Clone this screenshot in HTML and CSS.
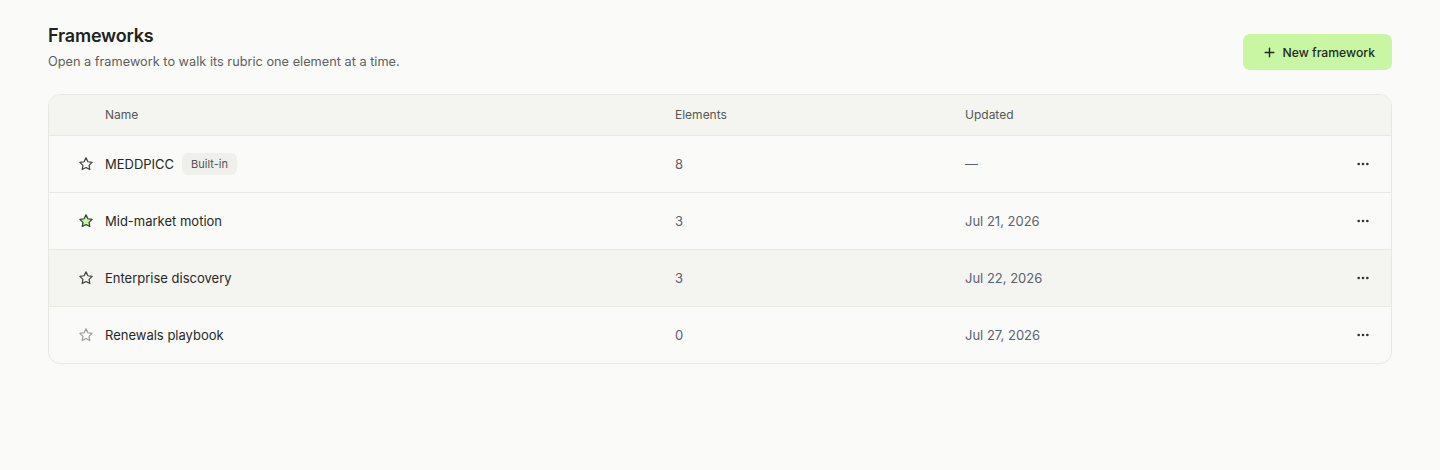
FILE: index.html
```html
<!DOCTYPE html>
<html lang="en">
<head>
<meta charset="utf-8">
<title>Frameworks</title>
<link rel="stylesheet" href="styles.css">
</head>
<body>
<main class="page">
  <header class="page-head">
    <div class="titles">
      <h1 class="title">Frameworks</h1>
      <p class="subtitle">Open a framework to walk its rubric one element at a time.</p>
    </div>
    <button class="btn-primary" type="button">
      <svg class="plus" viewBox="0 0 24 24" width="13" height="13" fill="none" stroke="currentColor" stroke-width="2.6" stroke-linecap="round"><path d="M12 4v16M4 12h16"/></svg>
      <span>New framework</span>
    </button>
  </header>

  <div class="table">
    <div class="row head">
      <div class="cell"></div>
      <div class="cell">Name</div>
      <div class="cell">Elements</div>
      <div class="cell">Updated</div>
      <div class="cell"></div>
    </div>

    <div class="row">
      <div class="cell star-cell"><svg class="star" viewBox="0 0 24 24"><path d="M12 2.8l2.85 5.78 6.38.93-4.62 4.5 1.09 6.35L12 17.36l-5.7 3 1.09-6.35-4.62-4.5 6.38-.93z"/></svg></div>
      <div class="cell name">MEDDPICC <span class="badge">Built-in</span></div>
      <div class="cell muted">8</div>
      <div class="cell muted">—</div>
      <div class="cell more"><svg viewBox="0 0 24 24" width="16" height="16"><circle cx="5.5" cy="12" r="2"/><circle cx="12" cy="12" r="2"/><circle cx="18.5" cy="12" r="2"/></svg></div>
    </div>

    <div class="row">
      <div class="cell star-cell"><svg class="star fav" viewBox="0 0 24 24"><path d="M12 2.8l2.85 5.78 6.38.93-4.62 4.5 1.09 6.35L12 17.36l-5.7 3 1.09-6.35-4.62-4.5 6.38-.93z"/></svg></div>
      <div class="cell name">Mid-market motion</div>
      <div class="cell muted">3</div>
      <div class="cell muted">Jul 21, 2026</div>
      <div class="cell more"><svg viewBox="0 0 24 24" width="16" height="16"><circle cx="5.5" cy="12" r="2"/><circle cx="12" cy="12" r="2"/><circle cx="18.5" cy="12" r="2"/></svg></div>
    </div>

    <div class="row hover">
      <div class="cell star-cell"><svg class="star" viewBox="0 0 24 24"><path d="M12 2.8l2.85 5.78 6.38.93-4.62 4.5 1.09 6.35L12 17.36l-5.7 3 1.09-6.35-4.62-4.5 6.38-.93z"/></svg></div>
      <div class="cell name">Enterprise discovery</div>
      <div class="cell muted">3</div>
      <div class="cell muted">Jul 22, 2026</div>
      <div class="cell more"><svg viewBox="0 0 24 24" width="16" height="16"><circle cx="5.5" cy="12" r="2"/><circle cx="12" cy="12" r="2"/><circle cx="18.5" cy="12" r="2"/></svg></div>
    </div>

    <div class="row">
      <div class="cell star-cell"><svg class="star faint" viewBox="0 0 24 24"><path d="M12 2.8l2.85 5.78 6.38.93-4.62 4.5 1.09 6.35L12 17.36l-5.7 3 1.09-6.35-4.62-4.5 6.38-.93z"/></svg></div>
      <div class="cell name">Renewals playbook</div>
      <div class="cell muted">0</div>
      <div class="cell muted">Jul 27, 2026</div>
      <div class="cell more"><svg viewBox="0 0 24 24" width="16" height="16"><circle cx="5.5" cy="12" r="2"/><circle cx="12" cy="12" r="2"/><circle cx="18.5" cy="12" r="2"/></svg></div>
    </div>
  </div>
</main>
</body>
</html>
```

FILE: styles.css
```css
* { box-sizing: border-box; }
html, body { margin: 0; padding: 0; }
body {
  background: #fafaf8;
  font-family: Inter, "Noto Sans", sans-serif;
  color: #262626;
  -webkit-font-smoothing: antialiased;
}
.page {
  padding: 24px 48px;
}
.page-head {
  display: flex;
  justify-content: space-between;
  align-items: flex-end;
}
.title {
  margin: 0;
  font-size: 18px;
  line-height: 24px;
  font-weight: 600;
  color: #1f2320;
  letter-spacing: -0.2px;
}
.subtitle {
  margin: 4px 0 0;
  font-size: 12.75px;
  line-height: 20px;
  color: #5c5f5c;
}
.btn-primary {
  display: flex;
  align-items: center;
  gap: 7px;
  height: 36px;
  padding: 0 17px 0 20px;
  margin-bottom: 2px;
  border: none;
  border-radius: 7px;
  background: #c8f6a2;
  color: #1d2a1e;
  font-family: inherit;
  font-size: 12.2px;
  font-weight: 500;
  cursor: pointer;
}
.plus { display: block; }

.table {
  margin-top: 22px;
  border: 1px solid #e8e8e3;
  border-radius: 12px;
  overflow: hidden;
  background: #fafaf8;
}
.row {
  display: grid;
  grid-template-columns: 56px 570px 290px 1fr 56px;
  align-items: center;
  height: 57px;
  border-top: 1px solid #e9e9e4;
  font-size: 13px;
}
.row.head {
  height: 40px;
  padding-bottom: 2px;
  border-top: none;
  background: #f4f4f0;
  font-size: 12px;
  color: #555855;
}
.row.hover { background: #f4f4f0; }
.cell { display: flex; align-items: center; }
.star-cell { padding-left: 29px; }
.star {
  width: 16px;
  height: 16px;
  fill: none;
  stroke: #3d403d;
  stroke-width: 1.8;
  stroke-linejoin: round;
}
.star.fav { fill: #c8f6a2; stroke: #2b3f2c; }
.star.faint { stroke: #9a9c9a; }
.name { color: #262826; gap: 8px; }
.badge {
  display: inline-flex;
  align-items: center;
  height: 22px;
  padding: 0 9px;
  border-radius: 6px;
  background: #efefeb;
  font-size: 11px;
  color: #505350;
}
.muted { color: #5a6070; }
.more { justify-content: center; }
.more svg { fill: #333533; display: block; }
```
